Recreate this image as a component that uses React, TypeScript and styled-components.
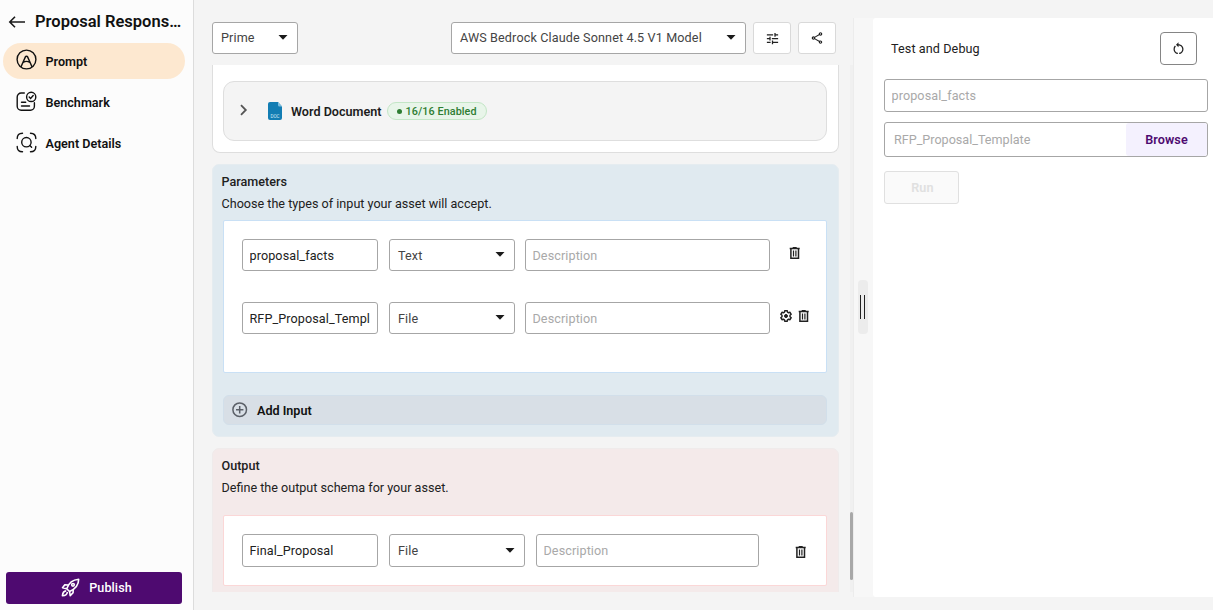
import React from "react";
import styled, { createGlobalStyle, css } from "styled-components";
import { MdTune, MdOutlineShare, MdRestartAlt } from "react-icons/md";

const GlobalStyle = createGlobalStyle`
  *, *::before, *::after { box-sizing: border-box; }
  body { margin: 0; overflow: hidden; font-family: Roboto, "Liberation Sans", sans-serif; font-size: 12.6px; color: #212121; }
  button, input { font: inherit; letter-spacing: inherit; }
  svg { display: block; flex: none; }
`;

const Page = styled.div`
  display: flex;
  width: 100vw;
  height: 100vh;
  background: #f4f4f4;
`;

/* Sidebar */
const Sidebar = styled.aside`
  display: flex;
  flex-direction: column;
  width: 194px;
  flex: none;
  padding: 0 3px 6px;
  background: #fcfcfc;
  border-right: 1px solid #dcdcdc;
`;
const TitleRow = styled.header`
  display: flex;
  align-items: center;
  gap: 9px;
  height: 43px;
  padding: 0 6px 0 5px;
`;
const AgentTitle = styled.h1`
  margin: 0;
  width: 148px;
  font-size: 16.5px;
  font-weight: 600;
  line-height: 22px;
  color: #111;
  white-space: nowrap;
`;
const NavItem = styled.a<{ $active?: boolean }>`
  display: flex;
  align-items: center;
  gap: 9px;
  width: 182px;
  height: 36px;
  margin-bottom: 5px;
  padding-left: 12.5px;
  border-radius: 18px;
  font-weight: 600;
  color: #111;
  background: ${(p) => (p.$active ? "#fde8d0" : "transparent")};
  svg { margin-top: ${(p) => (p.$active ? -4 : -2)}px; }
`;
const PublishButton = styled.button`
  display: flex;
  align-items: center;
  justify-content: center;
  gap: 9px;
  height: 32px;
  width: 176px;
  margin: auto 0 0 3px;
  padding: 0 0 1px 5px;
  border: 0;
  border-radius: 3px;
  background: #4e0a70;
  color: #fff;
  font-weight: 500;
  letter-spacing: 0.1px;
`;

/* Editor column */
const Editor = styled.main`
  display: flex;
  flex-direction: column;
  width: 660px;
  flex: none;
  padding: 22px 0 18px 18px;
`;
const Toolbar = styled.div`
  display: flex;
  align-items: center;
  height: 32px;
  margin-bottom: 11px;
  padding-right: 18px;
`;
const Spacer = styled.div`
  flex: 1;
`;
const field = css`
  height: 32px;
  border: 1px solid #a6a6a6;
  border-radius: 3px;
  background: #fff;
  letter-spacing: 0.1px;
`;
const SelectBox = styled.div<{ $w: number; $lift?: number; $tall?: boolean; $bar?: boolean }>`
  ${field}
  display: flex;
  align-items: center;
  justify-content: space-between;
  width: ${(p) => p.$w}px;
  ${(p) => p.$tall && "height: 33px;"}
  padding: 0 ${(p) => (p.$tall ? 9 : 9.5)}px ${(p) => (p.$bar ? 1 : 0)}px 8px;
  color: #444;
  letter-spacing: 0.13px;
  svg { margin-top: ${(p) => p.$lift ?? -1}px; }
`;
const TextInput = styled.input<{ $w: number; $tall?: boolean }>`
  ${field}
  display: block;
  width: ${(p) => p.$w}px;
  ${(p) => p.$tall && "height: 33px;"}
  padding: ${(p) => (p.$tall ? "0 7px 1px 6.5px" : "1px 7px 0 6.5px")};
  color: #212121;
  outline: none;
  &::placeholder { color: #a9a9a9; opacity: 1; }
`;
const ToolButton = styled.button`
  display: flex;
  align-items: center;
  justify-content: center;
  width: 38px;
  height: 32px;
  margin-left: 7px;
  padding: 0;
  border: 1px solid #d9d9d9;
  border-radius: 3px;
  background: #fff;
  color: #212121;
`;
const ScrollRow = styled.div`
  display: flex;
  flex: 1;
  min-height: 0;
`;
const ScrollContent = styled.div`
  display: flex;
  flex-direction: column;
  gap: 11px;
  width: 627px;
  margin-right: 11px;
  overflow: hidden;
`;
const ScrollTrack = styled.div`
  width: 3px;
  padding-top: 447px;
  background: #f0f0f0;
`;
const ScrollThumb = styled.div`
  height: 68px;
  border-radius: 2px;
  background: #a8a8a8;
`;

const ToolsCard = styled.section`
  flex: none;
  height: 88px;
  padding: 16px 11px 0 10px;
  border: 1px solid #dedede;
  border-top: 0;
  border-radius: 0 0 8px 8px;
  background: #fff;
`;
const ToolRow = styled.div`
  display: flex;
  align-items: center;
  height: 60px;
  padding-left: 15px;
  border: 1px solid #dedede;
  border-radius: 11px;
  background: #f4f4f4;
`;
const ChevronSlot = styled.div`
  width: 29px;
  padding-bottom: 2px;
`;
const ToolName = styled.span`
  margin-left: 9px;
  padding-top: 1px;
  font-weight: 600;
  color: #1c1c1c;
`;
const StatusPill = styled.span`
  display: flex;
  align-items: center;
  gap: 4px;
  height: 18px;
  margin-left: 5px;
  padding: 0 9px;
  border: 1px solid #c3e6c6;
  border-radius: 9px;
  background: #e8f5e9;
  color: #2e7d32;
  font-size: 10.8px;
  font-weight: 500;
  letter-spacing: 0.08px;
  &::before {
    content: "";
    width: 5px;
    height: 5px;
    margin-top: 1px;
    border-radius: 50%;
    background: #2e7d32;
  }
`;

const Section = styled.section<{ $tone: "blue" | "rose" }>`
  flex: none;
  height: ${(p) => (p.$tone === "blue" ? 273 : 200)}px;
  padding: 8px 11px 0 10px;
  border: 1px solid ${(p) => (p.$tone === "blue" ? "#e5ecf0" : "#efebeb")};
  border-radius: 7px;
  background: ${(p) => (p.$tone === "blue" ? "#e0eaf0" : "#f4eaea")};
`;
const SectionTitle = styled.h2`
  margin: 0 0 4px -1.5px;
  font-size: 12.6px;
  font-weight: 500;
  line-height: 18px;
`;
const SectionHint = styled.p`
  margin: 0 0 0 -1.5px;
  line-height: 18px;
`;
const Panel = styled.div<{ $tone: "blue" | "rose" }>`
  height: ${(p) => (p.$tone === "blue" ? 153 : 71)}px;
  margin-top: ${(p) => (p.$tone === "blue" ? 7 : 18)}px;
  padding: 18px 0 0 18px;
  border: 1px solid ${(p) => (p.$tone === "blue" ? "#c9e0f5" : "#fbd7d7")};
  border-radius: 2px;
  background: #fff;
`;
const FieldRow = styled.div`
  display: flex;
  margin-bottom: 31px;
`;
const FieldGroup = styled.div<{ $end: number }>`
  display: flex;
  gap: 11px;
  margin-right: ${(p) => p.$end}px;
`;
const RowActions = styled.div<{ $ml: number; $mt: number }>`
  display: flex;
  gap: 6px;
  margin: ${(p) => p.$mt}px 0 0 ${(p) => p.$ml}px;
`;
const AddInput = styled.button`
  display: flex;
  align-items: center;
  gap: 9px;
  width: 100%;
  height: 30px;
  margin-top: 22px;
  padding: 0 0 0 8px;
  border: 1px solid #d2dfea;
  border-radius: 6px;
  background: #d8dfe6;
  color: #111;
  font-weight: 600;
`;

/* Test column */
const SplitArea = styled.div`
  display: flex;
  flex: 1;
  margin: 18px 0 13px -1px;
  border-left: 1px solid #ececec;
  background: #f7f7f7;
`;
const Gutter = styled.div`
  width: 19px;
  flex: none;
  padding: 262px 0 0 4px;
`;
const DragHandle = styled.div`
  display: flex;
  align-items: center;
  gap: 3px;
  width: 10px;
  height: 54px;
  padding-left: 2px;
  border-radius: 4px;
  background: #ececec;
  &::before, &::after {
    content: "";
    width: 1px;
    height: 24px;
    background: #212121;
  }
`;
const DebugPanel = styled.section`
  flex: 1;
  padding: 14px 5px 0 11px;
  border-radius: 3px 0 0 3px;
  background: #fff;
`;
const DebugHeader = styled.div`
  display: flex;
  justify-content: space-between;
  align-items: center;
  height: 33px;
  margin-bottom: 14px;
  padding: 0 11px 0 7px;
  letter-spacing: 0.1px;
`;
const ResetButton = styled.button`
  display: flex;
  align-items: center;
  justify-content: center;
  width: 37px;
  height: 33px;
  padding: 0 0 1px 0;
  border: 1px solid #858585;
  border-radius: 4px;
  background: #fff;
  color: #212121;
`;
const FileField = styled.div`
  ${field}
  display: flex;
  align-items: center;
  justify-content: space-between;
  height: 35px;
  margin: 10px 0 14px;
  padding-left: 9px;
  color: #a9a9a9;
  letter-spacing: 0;
`;
const BrowseButton = styled.button`
  width: 81px;
  height: 33px;
  border: 0;
  border-radius: 3px;
  background: #f4f1fe;
  color: #4e0a70;
  font-weight: 600;
  letter-spacing: 0.1px;
`;
const RunButton = styled.button`
  width: 75px;
  height: 33px;
  padding: 0 5px 0 7px;
  border: 1px solid #e0e0e0;
  border-radius: 3px;
  background: #fafafa;
  color: #e0e0e0;
  font-weight: 600;
  letter-spacing: 0.2px;
`;

/* Icons */
const Caret = () => (
  <svg width="10" height="5" viewBox="0 0 10 5"><path d="M0.5 0h9L5 4.8z" fill="#1a1a1a" /></svg>
);
const BackIcon = () => (
  <svg width="18" height="14" viewBox="0 0 18 14" fill="none" stroke="#1a1a1a" strokeWidth="1.6">
    <path d="M17 7H2M7 1.8L1.8 7 7 12.2" />
  </svg>
);
const PromptIcon = () => (
  <svg width="21" height="21" viewBox="0 0 21 21" fill="none" stroke="#111" strokeWidth="1.4">
    <circle cx="10.5" cy="10.5" r="9.4" />
    <path d="M4.9 18L9.4 7.9a1.2 1.2 0 0 1 2.2 0l4.5 10.1M7.2 13.3q3.3-1.8 6.6 0" />
  </svg>
);
const BenchmarkIcon = () => (
  <svg width="21" height="21" viewBox="0 0 21 21" fill="none" stroke="#111" strokeWidth="1.4" strokeLinecap="round">
    <path d="M8.3 2H5.2A4 4 0 0 0 1.2 6v9.3a4 4 0 0 0 4 4h9.2a4 4 0 0 0 4-4v-3.5" />
    <circle cx="15.2" cy="5.9" r="4.6" />
    <path d="M13.2 6l1.4 1.4 2.6-2.8M5.5 11.2h4.2M5.5 15h8" />
  </svg>
);
const DetailsIcon = () => (
  <svg width="21" height="21" viewBox="0 0 21 21" fill="none" stroke="#111" strokeWidth="1.4" strokeLinecap="round">
    <path d="M1.2 6.5Q1.2 1.2 6.5 1.2M14.5 1.2Q19.8 1.2 19.8 6.5M19.8 14.5Q19.8 19.8 14.5 19.8M6.5 19.8Q1.2 19.8 1.2 14.5" />
    <circle cx="10.4" cy="10.2" r="4.7" />
    <path d="M13.8 13.6l1.8 1.7" />
  </svg>
);
const RocketIcon = () => (
  <svg width="19" height="19" viewBox="0 0 20 20" fill="none" stroke="#fff" strokeWidth="1.7" strokeLinejoin="round">
    <path d="M6 11.3C8 5.5 12 1.8 18.6 1.3C18.6 7.3 14.8 11.7 9 14.2z" />
    <circle cx="12.6" cy="7.2" r="1.4" />
    <path d="M7.7 7.3L4 7.2 1.6 10.2l4.4 1.1M12.8 12.2l-.1 3.3-3 3L9 14.2M5.5 13.5c-3 .2-3.8 2-4 5.2 3-.2 5-1 5.2-4" />
  </svg>
);
const ChevronIcon = () => (
  <svg width="9" height="12" viewBox="0 0 9 12" fill="none" stroke="#555" strokeWidth="1.8"><path d="M2 1.2L6.8 6 2 10.8" /></svg>
);
const DocIcon = () => (
  <svg width="14" height="18" viewBox="0 0 14 18">
    <path d="M2 0h8l4 4.5V16a2 2 0 0 1-2 2H2a2 2 0 0 1-2-2V2a2 2 0 0 1 2-2z" fill="#127db3" />
    <path d="M10 0l4 4.5h-2.5A1.5 1.5 0 0 1 10 3z" fill="#7fc0df" />
    <text x="7" y="15.6" textAnchor="middle" fontSize="4.6" letterSpacing="0" fill="#cfe9f5">DOC</text>
  </svg>
);
const TrashIcon = () => (
  <svg width="12" height="12" viewBox="0 0 12 12" fill="none" stroke="#212121">
    <path d="M.7 1.5h10M3.7 .6h4" strokeWidth="1.3" />
    <path d="M1.9 2v9.2h7.6V2" strokeWidth="1.5" />
    <path d="M4.5 3.6v5.8M6.9 3.6v5.8" strokeWidth="1.2" />
  </svg>
);
const GearIcon = () => (
  <svg width="12" height="12" viewBox="0 0 12 12" fill="none" stroke="#212121" strokeLinejoin="round">
    <path d="M4.8.7h2.4l.3 1.5 1.1.6 1.4-.5 1.2 2L10 5.3v1.4l1.2 1-1.2 2-1.4-.5-1.1.6-.3 1.5H4.8l-.3-1.5-1.1-.6-1.4.5-1.2-2L2 6.7V5.3l-1.2-1 1.2-2 1.4.5 1.1-.6z" strokeWidth="1.45" />
    <circle cx="6" cy="6" r="1.5" fill="#212121" />
  </svg>
);
const PlusCircleIcon = () => (
  <svg width="16" height="16" viewBox="0 0 16 16" fill="none" stroke="#5b6068" strokeWidth="1.5">
    <circle cx="7.7" cy="7.7" r="6.8" /><path d="M7.7 4v7.4M4 7.7h7.4" />
  </svg>
);

const params = [
  { name: "proposal_facts", type: "Text", gear: false },
  { name: "RFP_Proposal_Templ", type: "File", gear: true },
];

export default function App() {
  return (
    <Page>
      <GlobalStyle />
      <Sidebar>
        <TitleRow><BackIcon /><AgentTitle>Proposal Respons…</AgentTitle></TitleRow>
        <NavItem $active><PromptIcon />Prompt</NavItem>
        <NavItem><BenchmarkIcon />Benchmark</NavItem>
        <NavItem><DetailsIcon />Agent Details</NavItem>
        <PublishButton><RocketIcon />Publish</PublishButton>
      </Sidebar>

      <Editor>
        <Toolbar>
          <SelectBox $w={86} $bar $lift={0}>Prime<Caret /></SelectBox>
          <Spacer />
          <SelectBox $w={295} $bar $lift={0}>AWS Bedrock Claude Sonnet 4.5 V1 Model<Caret /></SelectBox>
          <ToolButton><MdTune size={15} /></ToolButton>
          <ToolButton><MdOutlineShare size={14} /></ToolButton>
        </Toolbar>
        <ScrollRow>
          <ScrollContent>
            <ToolsCard>
              <ToolRow>
                <ChevronSlot><ChevronIcon /></ChevronSlot>
                <DocIcon />
                <ToolName>Word Document</ToolName>
                <StatusPill>16/16 Enabled</StatusPill>
              </ToolRow>
            </ToolsCard>

            <Section $tone="blue">
              <SectionTitle>Parameters</SectionTitle>
              <SectionHint>Choose the types of input your asset will accept.</SectionHint>
              <Panel $tone="blue">
                {params.map((p) => (
                  <FieldRow key={p.name}>
                    <FieldGroup $end={10}>
                      <TextInput $w={136} defaultValue={p.name} />
                      <SelectBox $w={126} $lift={-2}>{p.type}<Caret /></SelectBox>
                    </FieldGroup>
                    <TextInput $w={245} placeholder="Description" />
                    <RowActions $ml={p.gear ? 10 : 19} $mt={8}>
                      {p.gear && <GearIcon />}
                      <TrashIcon />
                    </RowActions>
                  </FieldRow>
                ))}
              </Panel>
              <AddInput><PlusCircleIcon />Add Input</AddInput>
            </Section>

            <Section $tone="rose">
              <SectionTitle>Output</SectionTitle>
              <SectionHint>Define the output schema for your asset.</SectionHint>
              <Panel $tone="rose">
                <FieldRow>
                  <FieldGroup $end={11}>
                    <TextInput $w={136} $tall defaultValue="Final_Proposal" />
                    <SelectBox $w={136} $tall>File<Caret /></SelectBox>
                  </FieldGroup>
                  <TextInput $w={223} $tall placeholder="Description" />
                  <RowActions $ml={36} $mt={12}><TrashIcon /></RowActions>
                </FieldRow>
              </Panel>
            </Section>
          </ScrollContent>
          <ScrollTrack><ScrollThumb /></ScrollTrack>
        </ScrollRow>
      </Editor>

      <SplitArea>
        <Gutter><DragHandle /></Gutter>
        <DebugPanel>
          <DebugHeader>
            Test and Debug
            <ResetButton><MdRestartAlt size={15} /></ResetButton>
          </DebugHeader>
          <TextInput $w={324} $tall placeholder="proposal_facts" />
          <FileField>RFP_Proposal_Template<BrowseButton>Browse</BrowseButton></FileField>
          <RunButton>Run</RunButton>
        </DebugPanel>
      </SplitArea>
    </Page>
  );
}
